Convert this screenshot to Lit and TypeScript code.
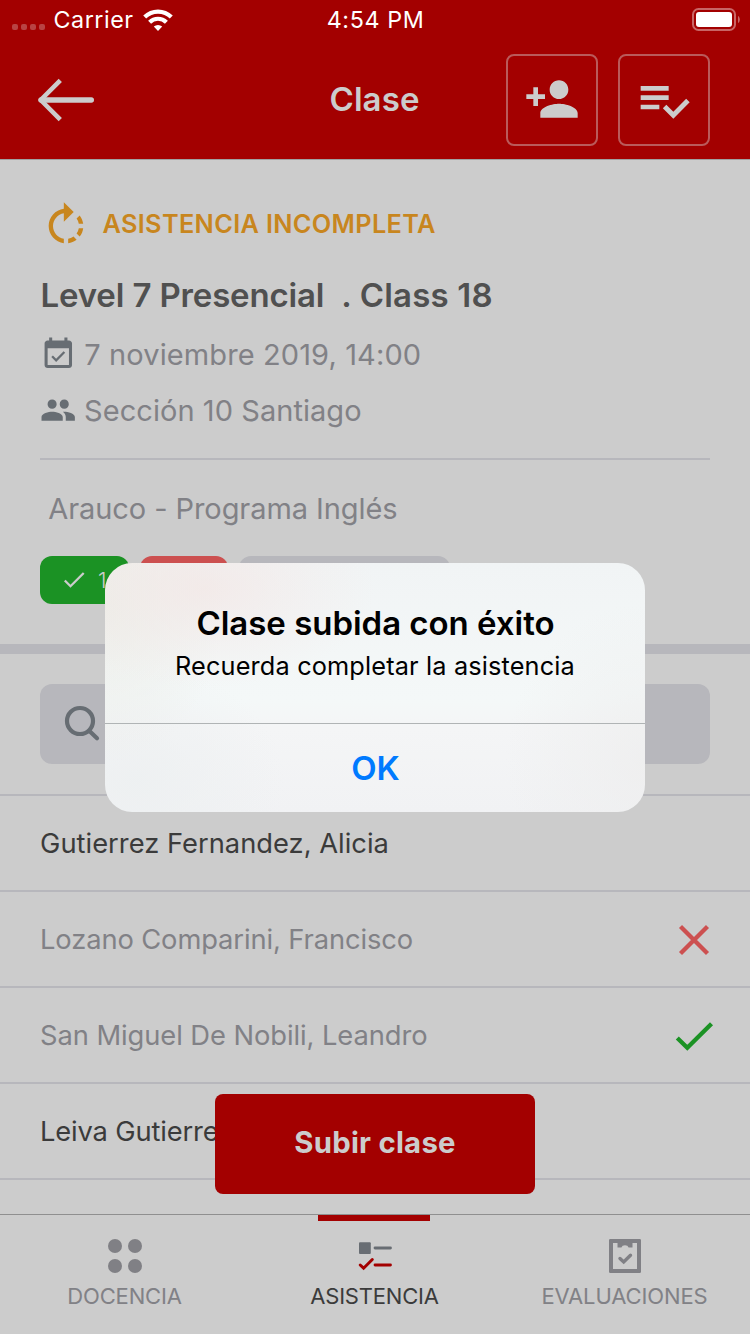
import { LitElement, html, svg, css, nothing } from "lit";
import { customElement, property } from "lit/decorators.js";

const material = (d: string, size: number, cls = "") => html`
  <svg class=${cls} width=${size} height=${size} viewBox="0 0 24 24" fill="currentColor"><path d=${d}></path></svg>`;

const PERSON_ADD =
  "M15 12c2.21 0 4-1.79 4-4s-1.79-4-4-4-4 1.79-4 4 1.79 4 4 4zm-9-2V7H4v3H1v2h3v3h2v-3h3v-2H6zm9 4c-2.67 0-8 1.34-8 4v2h16v-2c0-2.66-5.33-4-8-4z";
const PLAYLIST_CHECK =
  "M14 10H2v2h12v-2zm0-4H2v2h12V6zM2 16h8v-2H2v2zm19.5-4.5L23 13l-7 7-4.5-4.5L13 14l3 3 5.5-5.5z";
const ROTATE =
  "M15.55 5.55L11 1v3.07C7.06 4.56 4 7.92 4 12s3.05 7.44 7 7.93v-2.02c-2.84-.48-5-2.94-5-5.91s2.16-5.43 5-5.91V10l4.55-4.45zM19.93 11c-.17-1.39-.72-2.73-1.62-3.89l-1.42 1.42c.54.75.88 1.6 1.02 2.47h2.02zM13 17.9v2.02c1.39-.17 2.74-.71 3.9-1.61l-1.44-1.44c-.75.54-1.59.89-2.46 1.03zm3.89-2.42l1.42 1.41c.9-1.16 1.45-2.5 1.62-3.89h-2.02c-.14.87-.48 1.72-1.02 2.48z";
const EVENT =
  "M16.53 11.06L15.47 10l-4.88 4.88-2.12-2.12-1.06 1.06L10.59 17l5.94-5.94zM19 3h-1V1h-2v2H8V1H6v2H5c-1.11 0-1.99.9-1.99 2L3 19c0 1.1.89 2 2 2h14c1.1 0 2-.9 2-2V5c0-1.1-.9-2-2-2zm0 16H5V8h14v11z";
const PEOPLE =
  "M16 11c1.66 0 2.99-1.34 2.99-3S17.66 5 16 5c-1.66 0-3 1.34-3 3s1.34 3 3 3zm-8 0c1.66 0 2.99-1.34 2.99-3S9.66 5 8 5C6.34 5 5 6.34 5 8s1.34 3 3 3zm0 2c-2.33 0-7 1.17-7 3.5V19h14v-2.5c0-2.33-4.67-3.5-7-3.5zm8 0c-.29 0-.62.02-.97.05 1.16.84 1.97 1.97 1.97 3.45V19h6v-2.5c0-2.33-4.67-3.5-7-3.5z";

@customElement("status-bar")
export class StatusBar extends LitElement {
  static styles = css`
    :host {
      display: grid;
      grid-template-columns: 1fr auto 1fr;
      align-items: center;
      height: 39px;
      padding: 0 10px 0 12px;
      color: #fff;
      font-size: 23.3px;
      line-height: 39px;
    }
    .left { display: flex; align-items: center; }
    .dots { display: flex; gap: 3px; margin: 15px 8.5px 0 0; }
    .dot { width: 6px; height: 6px; border-radius: 2px; background: #b84343; }
    .carrier { letter-spacing: 0.53px; }
    .wifi { margin: 1px 0 0 9px; }
    .time { letter-spacing: 0.6px; margin-right: 1px; }
    .battery { justify-self: end; }
    svg { display: block; }
  `;
  render() {
    return html`
      <div class="left">
        <div class="dots">${[0, 1, 2, 3].map(() => html`<span class="dot"></span>`)}</div>
        <span class="carrier">Carrier</span>
        <svg class="wifi" width="30" height="22" viewBox="0 0 30 22" fill="none" stroke="#fff" stroke-width="4.2">
          <path d="M1.7 8.1a19 19 0 0 1 26.6 0"></path>
          <path d="M6.6 13.2a12 12 0 0 1 16.8 0"></path>
          <path d="M15 22l-4.2-4.4a6 6 0 0 1 8.4 0z" fill="#fff" stroke="none"></path>
        </svg>
      </div>
      <span class="time">4:54 PM</span>
      <svg class="battery" width="48" height="24" viewBox="0 0 48 24">
        <rect x="1" y="1" width="42" height="21" rx="5.5" fill="none" stroke="#c86666" stroke-width="2"></rect>
        <rect x="4" y="4" width="36" height="15" rx="3" fill="#fff"></rect>
        <path d="M46 8c2.4 1 2.4 6 0 7z" fill="#c86666"></path>
      </svg>`;
  }
}

@customElement("nav-header")
export class NavHeader extends LitElement {
  static styles = css`
    :host {
      display: grid;
      grid-template-columns: 1fr auto 1fr;
      align-items: center;
      height: 120px;
      padding: 0 40px 0 36px;
      box-sizing: border-box;
      color: #ccc;
    }
    .title { font-size: 33px; font-weight: 600; line-height: 40px; letter-spacing: 0.1px; margin-left: 3px; }
    .back { display: block; margin-top: 2px; }
    .actions { display: flex; gap: 20px; justify-self: end; margin-top: 2px; }
    .action {
      display: flex; align-items: center; justify-content: center;
      width: 92px; height: 92px; box-sizing: border-box;
      border: 2px solid #ba5a5a; border-radius: 8px;
    }
    .person { margin-top: -2px; }
  `;
  render() {
    return html`
      <svg class="back" width="60" height="46" viewBox="0 0 60 46" fill="none" stroke="currentColor">
        <path d="M24.3 3.3L4.7 23l19.6 19.7" stroke-width="4.6" stroke-linejoin="round"></path>
        <path d="M5 23h50.3" stroke-width="5.4" stroke-linecap="round"></path>
      </svg>
      <span class="title">Clase</span>
      <div class="actions">
        <div class="action">${material(PERSON_ADD, 56, "person")}</div>
        <div class="action">${material(PLAYLIST_CHECK, 56)}</div>
      </div>`;
  }
}

@customElement("student-row")
export class StudentRow extends LitElement {
  static styles = css`
    :host {
      display: flex; align-items: center; justify-content: space-between;
      height: 96px; box-sizing: border-box; padding: 2px 36px 0 40px;
      border-bottom: 2px solid #b7b7bc;
      font-size: 27.3px; line-height: 40px; color: #3b3b3b;
    }
    .muted { color: #818186; }
    svg { display: block; }
  `;
  @property() name = "";
  @property() mark = "";
  @property({ type: Number }) spacing = 0;
  render() {
    const icon =
      this.mark === "absent"
        ? svg`<path d="M6.500 6.500l27 27m0-27l-27 27" stroke="#cc5050"></path>`
        : svg`<path d="M3.300 22l10 9.700L37.500 7.800" stroke="#1b9224"></path>`;
    return html`
      <span class=${this.mark ? "muted" : ""} style="letter-spacing:${this.spacing}px">${this.name}</span>
      ${this.mark
        ? html`<svg width="40" height="40" viewBox="0 0 40 40" fill="none" stroke-width="4.3">${icon}</svg>`
        : nothing}`;
  }
}

@customElement("tab-bar")
export class TabBar extends LitElement {
  static styles = css`
    :host {
      display: grid; grid-template-columns: repeat(3, 250px);
      height: 120px; box-sizing: border-box; border-top: 1px solid #8f8f8f;
      background: #ccc; color: #818186; font-size: 22px;
    }
    .tab { display: flex; flex-direction: column; align-items: center; }
    .bar { width: 112px; height: 6px; margin-right: 2px; }
    .on { background: #a30000; }
    .active { color: #3b3b3b; }
    .label { line-height: 30px; margin: 5px 1px 0 0; }
    .a { letter-spacing: -0.15px; }
    .b { letter-spacing: -0.2px; }
    .c { letter-spacing: -0.12px; }
    svg { display: block; margin-top: 15px; }
  `;
  render() {
    return html`
      <div class="tab">
        <span class="bar"></span>
        <svg width="40" height="40" viewBox="0 0 40 40" fill="#808085">
          <circle cx="10" cy="10" r="7"></circle><circle cx="30" cy="10" r="7"></circle>
          <circle cx="10" cy="30" r="7"></circle><circle cx="30" cy="30" r="7"></circle>
        </svg>
        <span class="label a">DOCENCIA</span>
      </div>
      <div class="tab active">
        <span class="bar on"></span>
        <svg width="40" height="40" viewBox="0 0 40 40" fill="none" stroke-linecap="round">
          <rect x="4" y="6.2" width="11.8" height="11.8" rx="1" fill="#686d73"></rect>
          <path d="M20 12h15.5" stroke="#686d73" stroke-width="2.8"></path>
          <path d="M20 29h15.5" stroke="#a30000" stroke-width="2.8"></path>
          <path d="M5.2 29l3.4 3.2 8.7-8.7" stroke="#a30000" stroke-width="3"></path>
        </svg>
        <span class="label b">ASISTENCIA</span>
      </div>
      <div class="tab">
        <span class="bar"></span>
        <svg width="40" height="40" viewBox="0 0 40 40">
          <path fill="#808085" fill-rule="evenodd" d="M5.3 3h29.4q1.3 0 1.3 1.3v31.4q0 1.3-1.3 1.3h-29.4q-1.3 0-1.3-1.3v-31.4q0-1.3 1.3-1.3zM8 7v26h24V7h-4.5v4.500h-3.900a3.700 3 0 0 0-7.200 0h-3.900V7z"></path>
          <path d="M15 22.500l3.700 3.500 6.800-6.700" fill="none" stroke="#808085" stroke-width="3.400" stroke-linecap="round"></path>
        </svg>
        <span class="label c">EVALUACIONES</span>
      </div>`;
  }
}

@customElement("app-root")
export class AppRoot extends LitElement {
  static styles = css`
    :host {
      display: flex; flex-direction: column; position: relative; overflow: hidden;
      width: 750px; height: 1334px; background: #ccc;
      font-family: Inter, "Liberation Sans", sans-serif; color: #3b3b3b;
    }
    svg { display: block; }
    .top { background: #a30000; border-bottom: 1px solid #a0a0a0; }
    .info { padding: 40px 40px 0; height: 484px; box-sizing: border-box; display: flex; flex-direction: column; }
    .status { display: flex; align-items: center; height: 52px; color: #c8861e; font-size: 25.3px; font-weight: 600; letter-spacing: 0.34px; }
    .status-text { margin-left: 10.5px; line-height: 40px; margin-top: -4px; }
    .name { font-size: 33px; font-weight: 600; line-height: 40px; margin: 23px 0 0 0.5px; letter-spacing: -0.15px; color: #505050; display: flex; }
    .klass { margin-left: 17px; letter-spacing: 0.16px; }
    .line { display: flex; align-items: center; height: 56px; font-size: 29px; line-height: 40px; color: #818186; }
    .first { margin-top: 12px; }
    .line svg { color: #676d73; margin-top: -1px; }
    .line-text { margin-left: 7.7px; }
    .date { letter-spacing: 0.11px; }
    .section { letter-spacing: 0.05px; }
    .divider { height: 2px; background: #b7b7bc; margin-top: 19px; }
    .program { font-size: 29px; line-height: 40px; letter-spacing: -0.08px; color: #818186; margin: 29px 0 0 8.3px; }
    .pills { display: flex; gap: 11px; margin-top: 27px; }
    .pill { height: 48px; border-radius: 12px; display: flex; align-items: center; box-sizing: border-box; color: #ccc; font-size: 21.5px; }
    .green { width: 88.5px; background: #1b9224; padding-left: 23px; }
    .red { width: 88.5px; background: #cc5050; }
    .grey { width: 211px; background: #b7b7bc; }
    .count { margin-left: 13px; font-weight: 300; }
    .band { height: 10px; background: #b7b7bc; }
    .search { height: 80px; margin: 30px 40px; border-radius: 12px; background: #b7b7bc; display: flex; align-items: center; padding-left: 22px; box-sizing: border-box; }
    .list { border-top: 2px solid #b7b7bc; flex: 1; min-height: 0; }
    .upload {
      position: absolute; left: 215px; top: 1094px; width: 320px; height: 100px;
      border-radius: 8px; background: #a30000; color: #ccc; text-align: center;
      font-size: 29.3px; font-weight: 700; line-height: 97px; letter-spacing: 0.25px;
    }
    .alert {
      position: absolute; left: 105px; top: 563px; width: 540px; height: 249px; border-radius: 27px;
      display: flex; flex-direction: column; text-align: center; color: #000;
      background:
        radial-gradient(ellipse 170px 100px at 100px 25px, rgba(243, 230, 228, 0.7), rgba(243, 230, 228, 0.25) 60%, rgba(243, 230, 228, 0)),
        radial-gradient(ellipse 120px 160px at 0 40px, rgba(236, 236, 230, 0.8), rgba(236, 236, 230, 0)),
        radial-gradient(ellipse 140px 160px at 540px 200px, rgba(238, 238, 238, 0.8), rgba(238, 238, 238, 0)),
        radial-gradient(ellipse 150px 120px at 30px 220px, rgba(237, 240, 241, 0.9), rgba(237, 240, 241, 0)),
        linear-gradient(#f1f4f5, #f4f8f8 55%, #f4f5f6 66%, #f1f2f4);
    }
    .alert-title { font-size: 33px; font-weight: 600; line-height: 40px; margin-top: 40px; letter-spacing: -0.03px; padding-left: 1px; }
    .alert-text { font-size: 25.3px; line-height: 40px; margin-top: 3px; letter-spacing: 0.15px; }
    .ok { margin-top: auto; height: 89px; box-sizing: border-box; border-top: 1px solid #b0b4b5; padding-left: 1px; color: #007aff; font-size: 33px; font-weight: 600; line-height: 88px; }
  `;
  render() {
    return html`
      <div class="top">
        <status-bar></status-bar>
        <nav-header></nav-header>
      </div>
      <div class="info">
        <div class="status">${material(ROTATE, 52)}<span class="status-text">ASISTENCIA INCOMPLETA</span></div>
        <div class="name"><span>Level 7 Presencial</span><span class="klass">. Class 18</span></div>
        <div class="line first">${material(EVENT, 36.6)}<span class="line-text date">7 noviembre 2019, 14:00</span></div>
        <div class="line">${material(PEOPLE, 36.4)}<span class="line-text section">Sección 10 Santiago</span></div>
        <div class="divider"></div>
        <div class="program">Arauco - Programa Inglés</div>
        <div class="pills">
          <div class="pill green">
            <svg width="22" height="18" viewBox="0 0 22 18" fill="none" stroke="currentColor" stroke-width="2.3"><path d="M1.8 9.5l5.7 5.7L20.7 2"></path></svg>
            <span class="count">1</span>
          </div>
          <div class="pill red"></div>
          <div class="pill grey"></div>
        </div>
      </div>
      <div class="band"></div>
      <div class="search">
        <svg width="40" height="40" viewBox="0 0 40 40" fill="none" stroke="#676d73" stroke-width="4.2" stroke-linecap="round">
          <circle cx="18" cy="17" r="13"></circle><path d="M27.7 27.2l7.3 7"></path>
        </svg>
      </div>
      <div class="list">
        <student-row name="Gutierrez Fernandez, Alicia" .spacing=${0.02}></student-row>
        <student-row name="Lozano Comparini, Francisco" mark="absent" .spacing=${-0.1}></student-row>
        <student-row name="San Miguel De Nobili, Leandro" mark="present" .spacing=${-0.06}></student-row>
        <student-row name="Leiva Gutierre" .spacing=${-0.15}></student-row>
      </div>
      <tab-bar></tab-bar>
      <div class="upload">Subir clase</div>
      <div class="alert">
        <div class="alert-title">Clase subida con éxito</div>
        <div class="alert-text">Recuerda completar la asistencia</div>
        <div class="ok">OK</div>
      </div>`;
  }
}
